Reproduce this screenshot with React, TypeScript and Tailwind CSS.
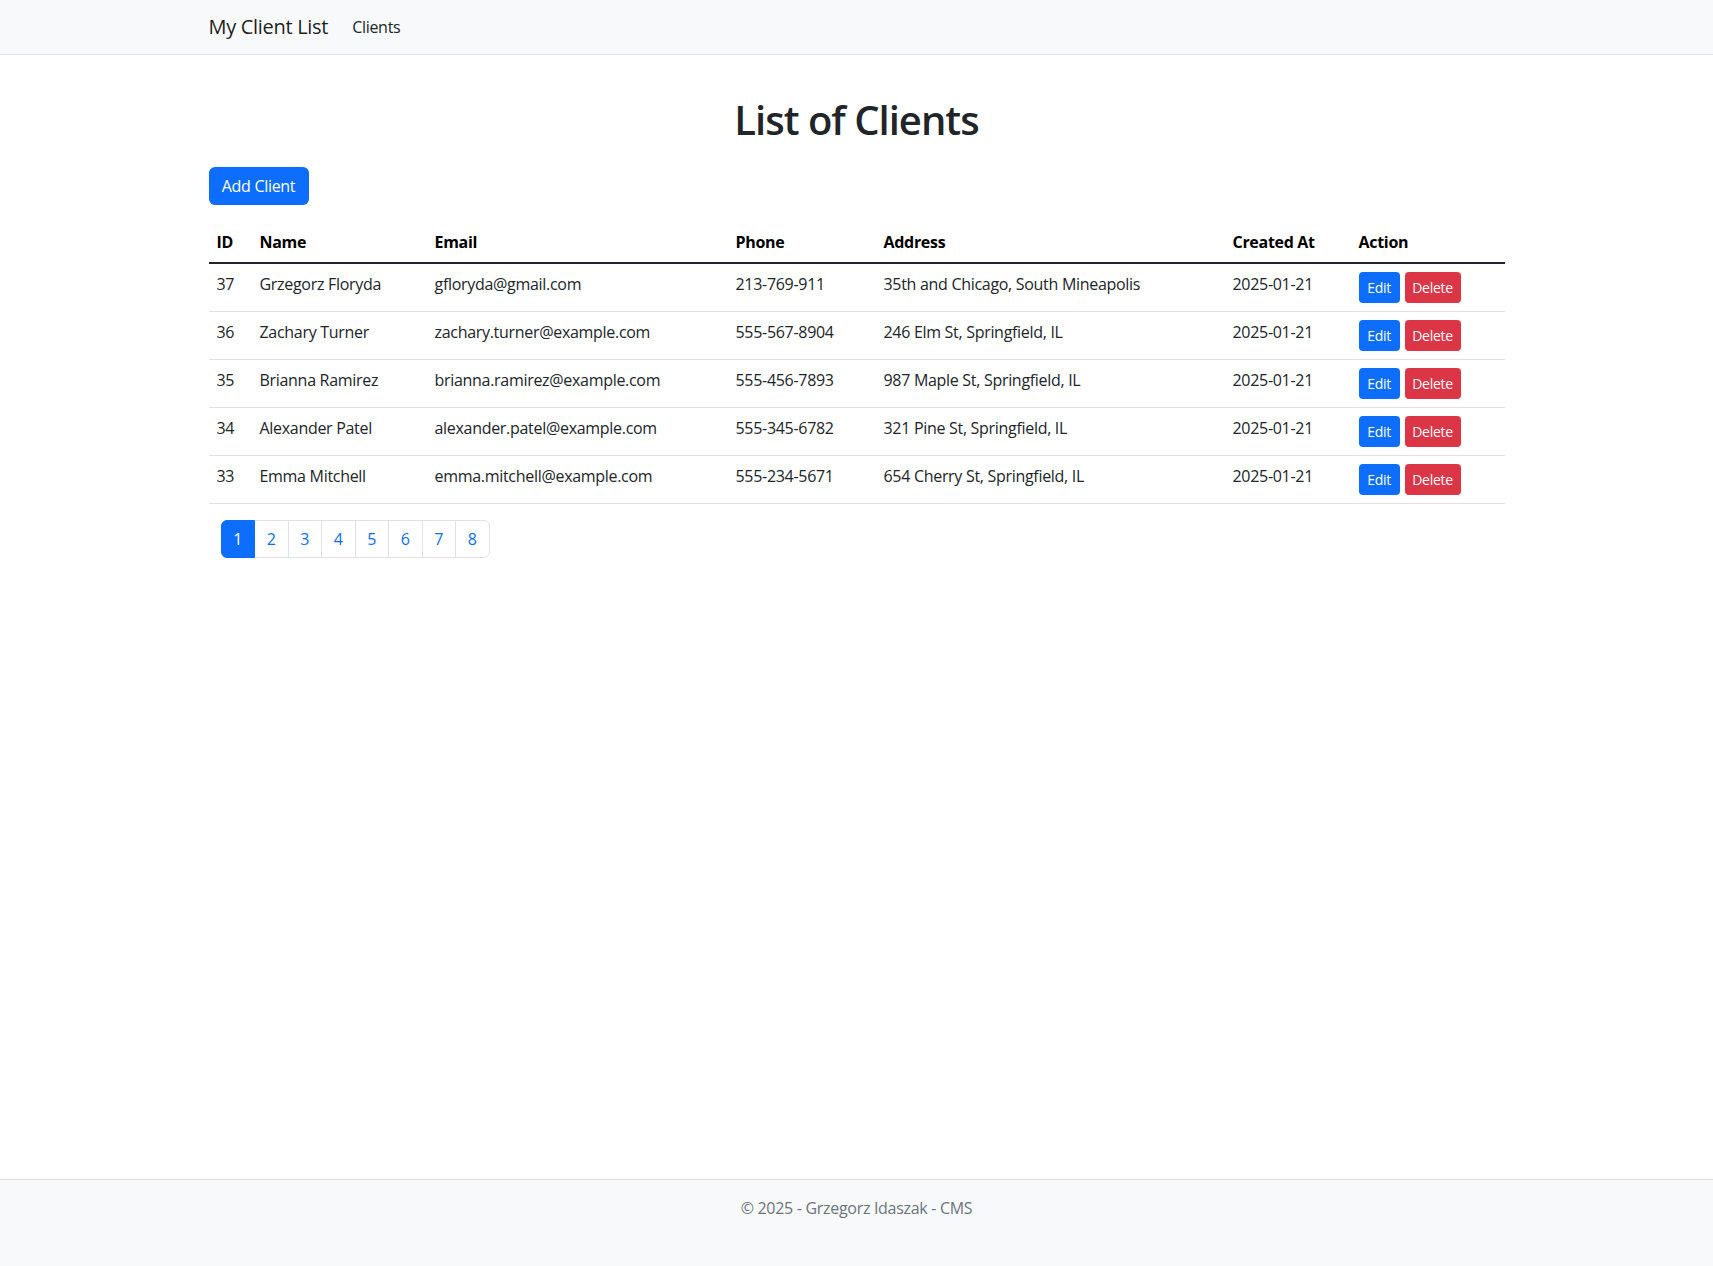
import React from 'react';

type Client = {
  id: number;
  name: string;
  email: string;
  phone: string;
  address: string;
  createdAt: string;
};

const clients: Client[] = [
  { id: 37, name: 'Grzegorz Floryda', email: 'gfloryda@gmail.com', phone: '213-769-911', address: '35th and Chicago, South Mineapolis', createdAt: '2025-01-21' },
  { id: 36, name: 'Zachary Turner', email: 'zachary.turner@example.com', phone: '555-567-8904', address: '246 Elm St, Springfield, IL', createdAt: '2025-01-21' },
  { id: 35, name: 'Brianna Ramirez', email: 'brianna.ramirez@example.com', phone: '555-456-7893', address: '987 Maple St, Springfield, IL', createdAt: '2025-01-21' },
  { id: 34, name: 'Alexander Patel', email: 'alexander.patel@example.com', phone: '555-345-6782', address: '321 Pine St, Springfield, IL', createdAt: '2025-01-21' },
  { id: 33, name: 'Emma Mitchell', email: 'emma.mitchell@example.com', phone: '555-234-5671', address: '654 Cherry St, Springfield, IL', createdAt: '2025-01-21' },
];

const pages = [1, 2, 3, 4, 5, 6, 7, 8];

const columns = ['ID', 'Name', 'Email', 'Phone', 'Address', 'Created At', 'Action'];

const App: React.FC = () => {
  return (
    <div className="min-h-screen flex flex-col bg-white text-[#212529] font-['Segoe_UI','Open_Sans',sans-serif] text-base leading-6 tracking-[-0.3px]">
      {/* Navbar */}
      <header className="h-[55px] bg-[#f8f9fa] border-b border-[#dee2e6]">
        <div className="w-[1296px] mx-auto h-[54px] flex items-center">
          <span className="text-[20px] leading-[30px] text-black/90">My Client List</span>
          <a href="#" className="ml-6 text-[#212529]">Clients</a>
        </div>
      </header>

      {/* Main */}
      <main className="w-[1296px] mx-auto pt-[41px]">
        <h1 className="text-center text-[40px] leading-[48px] font-semibold tracking-[-1px] mb-[23px]">List of Clients</h1>

        <button className="h-[38px] w-[100px] bg-[#0d6efd] text-white rounded-md">Add Client</button>

        <table className="w-full table-fixed mt-[17px] border-collapse text-left">
          <colgroup>
            <col className="w-[43px]" />
            <col className="w-[175px]" />
            <col className="w-[301px]" />
            <col className="w-[148px]" />
            <col className="w-[349px]" />
            <col className="w-[126px]" />
            <col className="w-[154px]" />
          </colgroup>
          <thead>
            <tr className="border-b-2 border-[#212529]">
              {columns.map(c => (
                <th key={c} className="p-2 font-bold text-black align-top">{c}</th>
              ))}
            </tr>
          </thead>
          <tbody>
            {clients.map(c => (
              <tr key={c.id} className="border-b border-[#dee2e6]">
                <td className="p-2 align-top">{c.id}</td>
                <td className="p-2 align-top">{c.name}</td>
                <td className="p-2 align-top">{c.email}</td>
                <td className="p-2 align-top">{c.phone}</td>
                <td className="p-2 align-top">{c.address}</td>
                <td className="p-2 align-top">{c.createdAt}</td>
                <td className="p-2 align-top">
                  <div className="flex gap-[5px]">
                    <button className="h-[31px] w-[41px] text-sm bg-[#0d6efd] text-white rounded">Edit</button>
                    <button className="h-[31px] w-[56px] text-sm bg-[#dc3545] text-white rounded">Delete</button>
                  </div>
                </td>
              </tr>
            ))}
          </tbody>
        </table>

        {/* Pagination */}
        <nav className="mt-4 ml-3 flex">
          {pages.map((p, i) => (
            <a
              key={p}
              href="#"
              className={
                'h-[38px] w-[34.5px] flex items-center justify-center border ' +
                (i > 0 ? '-ml-px ' : '') +
                (i === 0 ? 'rounded-l-md ' : '') +
                (i === pages.length - 1 ? 'rounded-r-md ' : '') +
                (p === 1
                  ? 'bg-[#0d6efd] border-[#0d6efd] text-white relative z-10'
                  : 'bg-white border-[#dee2e6] text-[#0d6efd]')
              }
            >
              {p}
            </a>
          ))}
        </nav>
      </main>

      {/* Footer */}
      <footer className="mt-auto h-[87px] bg-[#f8f9fa] border-t border-[#dee2e6] pt-4 text-center text-[#6c757d]">
        © 2025 - Grzegorz Idaszak - CMS
      </footer>
    </div>
  );
};

export default App;
